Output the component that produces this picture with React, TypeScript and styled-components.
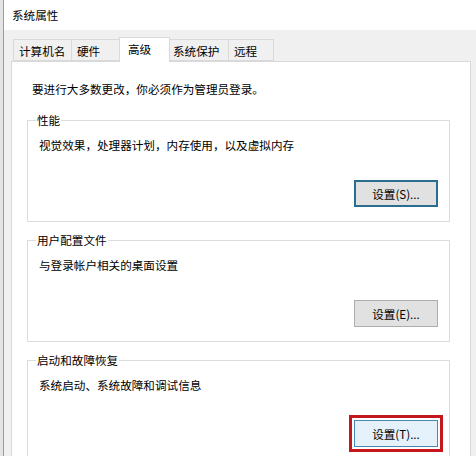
import React from 'react';
import styled, { createGlobalStyle } from 'styled-components';

const GlobalStyle = createGlobalStyle`
  html, body {
    margin: 0;
    padding: 0;
    background: #f0f0f0;
  }
  body {
    font-family: "Noto Sans CJK SC", "Noto Sans", sans-serif;
    font-size: 11.6px;
    color: #000;
  }
`;

const Screen = styled.div`
  width: 476px;
  height: 456px;
  display: flex;
  overflow: hidden;
`;

// sliver of the window lying behind the dialog
const BehindEdge = styled.div`
  width: 3px;
  background: #e4e4e4;
  border-right: 1px solid #9c9c9c;
  flex-shrink: 0;
`;

const Window = styled.div`
  flex: 1;
  display: flex;
  flex-direction: column;
  background: #f0f0f0;
`;

const TitleBar = styled.div`
  height: 30px;
  background: #fff;
  display: flex;
  align-items: center;
  padding-left: 8px;
  flex-shrink: 0;
`;

const Body = styled.div`
  flex: 1;
  padding: 7px 5px 0 7px;
  display: flex;
  flex-direction: column;
`;

const TabStrip = styled.div`
  display: flex;
  align-items: flex-end;
  height: 24px;
  padding-left: 2px;
  position: relative;
  z-index: 1;
`;

const Tab = styled.div<{ $w: number; $active?: boolean }>`
  box-sizing: border-box;
  width: ${({ $w }) => $w}px;
  height: ${({ $active }) => ($active ? '25px' : '22px')};
  margin: ${({ $active }) => ($active ? '0 -2px -1px -2px' : '0 0 0 -1px')};
  padding-left: ${({ $active }) => ($active ? '8px' : '5px')};
  padding-top: 3px;
  background: ${({ $active }) => ($active ? '#fff' : '#f0f0f0')};
  border: 1px solid #d9d9d9;
  border-bottom: ${({ $active }) => ($active ? 'none' : '1px solid #d9d9d9')};
  line-height: 16px;
  white-space: nowrap;
  position: relative;
  z-index: ${({ $active }) => ($active ? 2 : 1)};
  &:first-child {
    margin-left: 0;
  }
`;

const Panel = styled.div`
  flex: 1;
  background: #fff;
  border: 1px solid #d9d9d9;
  border-bottom: none;
  padding: 19px 20px 0 15px;
  display: flex;
  flex-direction: column;
`;

const Intro = styled.div`
  line-height: 16px;
  padding-left: 5px;
`;

const GroupBox = styled.div<{ $first?: boolean }>`
  position: relative;
  border: 1px solid #dcdcdc;
  margin-top: ${({ $first }) => ($first ? '23px' : '18px')};
  padding: 16px 11px 14px 11px;
  display: flex;
  flex-direction: column;
`;

const GroupTitle = styled.span`
  position: absolute;
  top: -9px;
  left: 8px;
  padding: 0 1px;
  background: #fff;
  line-height: 16px;
`;

const GroupText = styled.div`
  line-height: 16px;
`;

const ButtonRow = styled.div`
  display: flex;
  justify-content: flex-end;
  margin-top: 27px;
`;

type ButtonState = 'normal' | 'focused' | 'hover';

const DialogButton = styled.button<{ $state: ButtonState; $marked?: boolean }>`
  box-sizing: border-box;
  width: 84px;
  height: 27px;
  font-family: inherit;
  font-size: 11.6px;
  color: #000;
  line-height: 16px;
  padding: 0;
  background: ${({ $state }) => ($state === 'hover' ? '#e5f1fb' : '#e1e1e1')};
  border: ${({ $state }) =>
    $state === 'focused'
      ? '2px solid #2a6d8f'
      : $state === 'hover'
      ? '1px solid #4c87b0'
      : '1px solid #adadad'};
  outline: ${({ $marked }) => ($marked ? '3px solid #c4161c' : 'none')};
  outline-offset: 2px;
`;

const sections = [
  { title: '性能', text: '视觉效果，处理器计划，内存使用，以及虚拟内存', button: '设置(S)...', state: 'focused' as ButtonState },
  { title: '用户配置文件', text: '与登录帐户相关的桌面设置', button: '设置(E)...', state: 'normal' as ButtonState },
  { title: '启动和故障恢复', text: '系统启动、系统故障和调试信息', button: '设置(T)...', state: 'hover' as ButtonState, marked: true },
];

const tabs = [
  { label: '计算机名', w: 59 },
  { label: '硬件', w: 50 },
  { label: '高级', w: 51, active: true },
  { label: '系统保护', w: 62 },
  { label: '远程', w: 46 },
];

export default function App() {
  return (
    <Screen>
      <GlobalStyle />
      <BehindEdge />
      <Window>
        <TitleBar>系统属性</TitleBar>
        <Body>
          <TabStrip>
            {tabs.map((t) => (
              <Tab key={t.label} $w={t.w} $active={t.active}>
                {t.label}
              </Tab>
            ))}
          </TabStrip>
          <Panel>
            <Intro>要进行大多数更改，你必须作为管理员登录。</Intro>
            {sections.map((s, i) => (
              <GroupBox key={s.title} $first={i === 0}>
                <GroupTitle>{s.title}</GroupTitle>
                <GroupText>{s.text}</GroupText>
                <ButtonRow>
                  <DialogButton $state={s.state} $marked={s.marked}>
                    {s.button}
                  </DialogButton>
                </ButtonRow>
              </GroupBox>
            ))}
          </Panel>
        </Body>
      </Window>
    </Screen>
  );
}
